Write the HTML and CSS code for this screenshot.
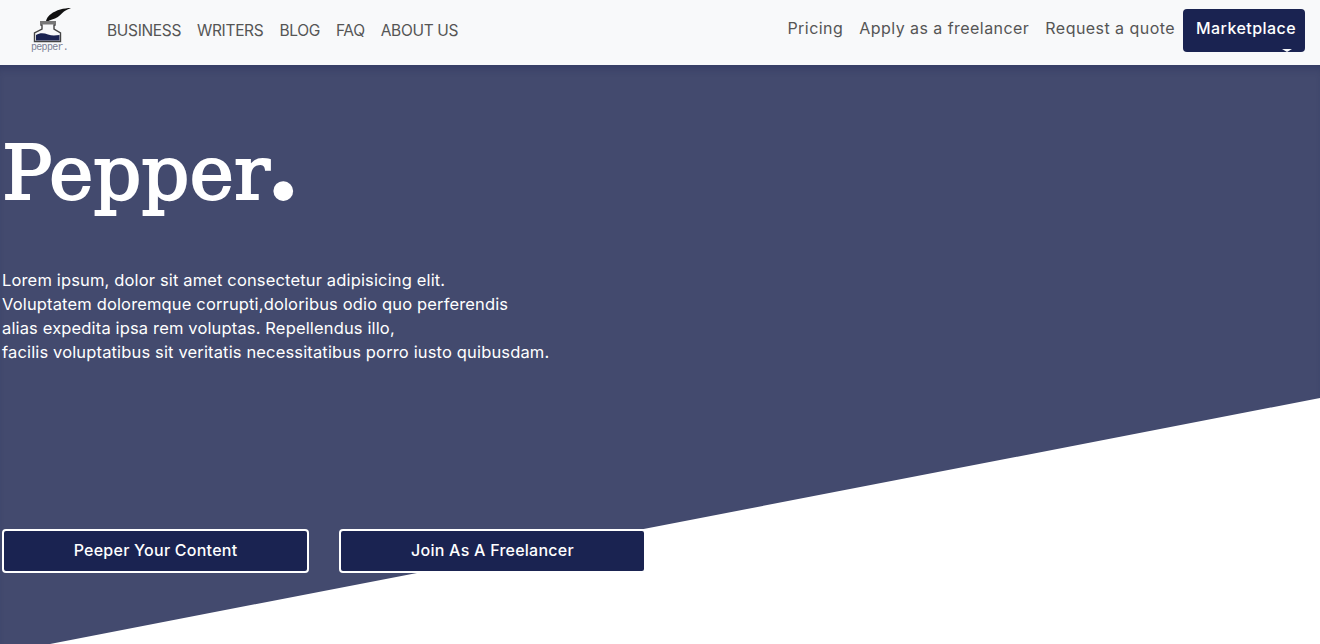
FILE: index.html
```html
<!DOCTYPE html>
<html lang="en">
<head>
<meta charset="utf-8">
<title>Pepper</title>
<link rel="stylesheet" href="styles.css">
</head>
<body>
<header class="nav">
  <a class="logo" href="#">
    <svg class="logo-mark" width="42" height="38" viewBox="30 6 42 38" aria-hidden="true">
      <path d="M71 8C64 8 56 10 51 14C47 17 46 20 46 22L47.5 22C49 20 52 19.5 55 18.5C59 17 62 13 64 11.5C66 10 69 9 71 8Z" fill="#111"/>
      <path d="M41 22H55V25H54V29L60.5 33V41.5H34.5V33L42 29V25H41Z" fill="#f8f9fa" stroke="#444" stroke-width="1.4"/>
      <rect x="40" y="21" width="16" height="3.5" fill="#777"/>
      <path d="M36 35C40 32.5 44 33 48 34.5C52 36 56 35.5 59.5 35V40.5H36Z" fill="#1a2351"/>
    </svg>
    <span class="logo-text">pepper.</span>
  </a>
  <nav class="nav-left">
    <a href="#">BUSINESS</a>
    <a href="#">WRITERS</a>
    <a href="#">BLOG</a>
    <a href="#">FAQ</a>
    <a href="#">ABOUT US</a>
  </nav>
  <nav class="nav-right">
    <a href="#">Pricing</a>
    <a href="#">Apply as a freelancer</a>
    <a href="#">Request a quote</a>
    <a class="market" href="#">Marketplace<span class="caret"></span></a>
  </nav>
</header>
<main class="hero">
  <h1 class="title">Pepper<span class="dot">.</span></h1>
  <p class="lead">Lorem ipsum, dolor sit amet consectetur adipisicing elit.<br>Voluptatem doloremque corrupti,doloribus odio quo perferendis<br>alias expedita ipsa rem voluptas. Repellendus illo,<br>facilis voluptatibus sit veritatis necessitatibus porro iusto quibusdam.</p>
  <div class="actions">
    <a class="cta" href="#">Peeper Your Content</a>
    <a class="cta" href="#">Join As A Freelancer</a>
  </div>
</main>
</body>
</html>
```
FILE: styles.css
```css
* { box-sizing: border-box; }
html, body { margin: 0; height: 100%; }
body {
  background: #fff;
  font-family: "Inter", "Liberation Sans", sans-serif;
  overflow: hidden;
}
a { text-decoration: none; color: inherit; }

.nav {
  position: relative;
  z-index: 2;
  display: flex;
  align-items: center;
  height: 65px;
  background: #f8f9fa;
  color: #555;
  padding-left: 30px;
}
.logo {
  display: flex;
  flex-direction: column;
  align-items: flex-start;
  width: 40px;
  margin-top: -7px;
}
.logo-mark { display: block; }
.logo-text {
  font: 10px/8px "Liberation Mono", monospace;
  letter-spacing: -.7px;
  color: #7a7f95;
  margin-left: 1px;
}
.nav-left {
  display: flex;
  gap: 16px;
  margin-left: 37px;
  font-size: 15.5px;
  letter-spacing: -.33px;
  margin-top: -5px;
}
.nav-right {
  display: flex;
  align-items: center;
  gap: 16px;
  margin-left: auto;
  margin-right: 15px;
  font-size: 16px;
  letter-spacing: .45px;
  margin-top: -9px;
}
.market {
  position: relative;
  display: block;
  width: 122px;
  height: 43px;
  margin-left: -8px;
  margin-top: 5px;
  padding: 9px 0 0 13px;
  background: #1a2351;
  color: #fff;
  font-weight: 500;
  white-space: nowrap;
  border-radius: 4px;
}
.caret {
  position: absolute;
  right: 13px;
  bottom: 0;
  width: 10px;
  height: 3px;
  background: #f8f9fa;
  clip-path: polygon(0 0, 100% 0, 50% 100%);
}

.hero {
  position: relative;
  height: 579px;
  padding: 51px 0 0 2px;
  color: #fff;
}
.hero::before {
  content: "";
  position: absolute;
  inset: 0;
  z-index: -1;
  background: #434a6e;
  clip-path: polygon(0 0, 100% 0, 100% 333px, 50px 579px, 0 579px);
  box-shadow: inset 0 8px 10px -6px rgba(26, 35, 81, .45);
}
.title {
  margin: 0;
  height: 100px;
  font: 400 75px/100px "DejaVu Serif", serif;
  -webkit-text-stroke: 2px #fff;
}
.dot {
  font-size: 95px;
  font-weight: 700;
  margin-left: -3px;
}
.lead {
  margin: 52px 0 0;
  font-size: 16.5px;
  letter-spacing: .15px;
  line-height: 24px;
  font-weight: 400;
}
.actions {
  display: flex;
  gap: 30px;
  margin-top: 165px;
}
.cta {
  display: flex;
  align-items: center;
  justify-content: center;
  width: 307px;
  height: 44px;
  padding-bottom: 2px;
  background: #1a2351;
  border: 2px solid #fff;
  border-radius: 4px;
  font-size: 16px;
  letter-spacing: .25px;
  font-weight: 500;
}
```
